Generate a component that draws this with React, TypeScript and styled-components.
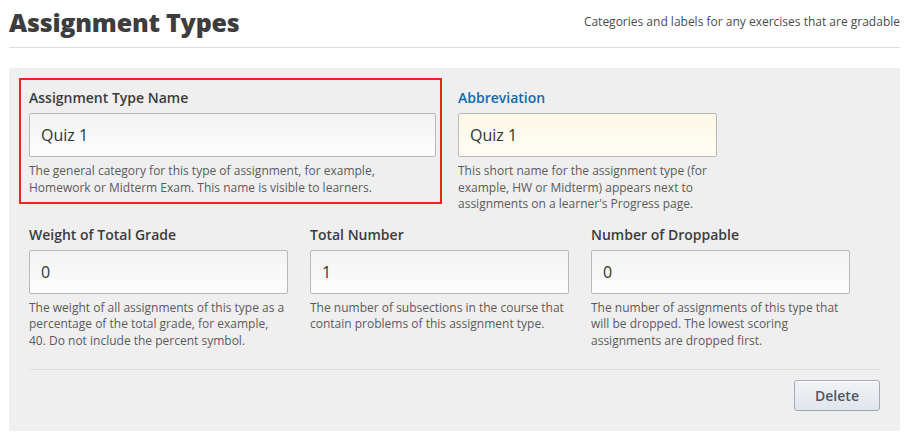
import React from "react";
import styled, { createGlobalStyle } from "styled-components";

const Global = createGlobalStyle`
  html, body { margin: 0; padding: 0; background: #fff; }
  body { font-family: "Open Sans", "Liberation Sans", sans-serif; color: #3c3c3c; }
  * { box-sizing: border-box; }
`;

const Page = styled.div`
  width: 917px;
  padding: 0 17px 0 9px;
`;

const Header = styled.header`
  display: flex;
  align-items: center;
  justify-content: space-between;
  height: 48px;
  border-bottom: 1px solid #ddd;
  padding-bottom: 4px;
`;

const Title = styled.h1`
  margin: 0;
  font-family: "Open Sans", sans-serif;
  font-weight: 800;
  font-size: 25px;
  letter-spacing: -0.2px;
  color: #3d3d3d;
`;

const Subtitle = styled.p`
  margin: 0;
  font-size: 12px;
  color: #4c4c4c;
`;

const Panel = styled.section`
  margin-top: 20px;
  background: #efefef;
  border-radius: 3px;
  padding: 10px 20px 20px 20px;
`;

const Row = styled.div<{ $gap: number; $mt?: number }>`
  display: flex;
  align-items: flex-start;
  gap: ${(p) => p.$gap}px;
  margin-top: ${(p) => p.$mt ?? 0}px;
`;

const Highlight = styled.div`
  margin-left: -10px;
  border: 2px solid #e8281c;
  padding: 8px 4px 6px 8px;
`;

const Field = styled.div<{ $w: number; $offset?: number }>`
  width: ${(p) => p.$w}px;
  margin-top: ${(p) => p.$offset ?? 0}px;
  display: flex;
  flex-direction: column;
`;

const Label = styled.label<{ $active?: boolean }>`
  font-size: 14px;
  font-weight: 600;
  line-height: 20px;
  color: ${(p) => (p.$active ? "#0e6bae" : "#3c3c3c")};
  margin-bottom: 5px;
`;

const Input = styled.input<{ $filled?: boolean }>`
  height: 44px;
  width: 100%;
  border: 1px solid #b9b9b9;
  border-radius: 2px;
  padding: 0 11px;
  font-family: "Open Sans", sans-serif;
  font-size: 16px;
  color: #333;
  background: ${(p) =>
    p.$filled
      ? "linear-gradient(#fcf8e8, #fffdf4)"
      : "linear-gradient(#f3f3f3, #fdfdfd)"};
  outline: none;
`;

const Help = styled.p`
  margin: 6px 0 0 0;
  font-size: 12px;
  line-height: 16.5px;
  color: #5b5b5b;
`;

const Divider = styled.hr`
  border: 0;
  border-top: 1px solid #dcdcdc;
  margin: 20px 0 10px 0;
`;

const Actions = styled.div`
  display: flex;
  justify-content: flex-end;
`;

const DeleteButton = styled.button`
  width: 86px;
  height: 31px;
  border: 1px solid #a2a8b6;
  border-radius: 3px;
  background: linear-gradient(#f1f3f6, #e1e5ec);
  font-family: "Open Sans", sans-serif;
  font-size: 14px;
  font-weight: 600;
  color: #4e5668;
  box-shadow: inset 0 1px 0 #fff;
`;

export default function App() {
  return (
    <>
      <Global />
      <Page>
        <Header>
          <Title>Assignment Types</Title>
          <Subtitle>Categories and labels for any exercises that are gradable</Subtitle>
        </Header>
        <Panel>
          <Row $gap={16}>
            <Highlight>
              <Field $w={407}>
                <Label>Assignment Type Name</Label>
                <Input defaultValue="Quiz 1" />
                <Help>
                  The general category for this type of assignment, for example,
                  <br />
                  Homework or Midterm Exam. This name is visible to learners.
                </Help>
              </Field>
            </Highlight>
            <Field $w={259} $offset={10}>
              <Label $active>Abbreviation</Label>
              <Input $filled defaultValue="Quiz 1" />
              <Help>
                This short name for the assignment type (for example, HW or
                Midterm) appears next to assignments on a learner's Progress page.
              </Help>
            </Field>
          </Row>
          <Row $gap={22} $mt={12}>
            <Field $w={259}>
              <Label>Weight of Total Grade</Label>
              <Input defaultValue="0" />
              <Help>
                The weight of all assignments of this type as a percentage of the
                total grade, for example, 40. Do not include the percent symbol.
              </Help>
            </Field>
            <Field $w={259}>
              <Label>Total Number</Label>
              <Input defaultValue="1" />
              <Help>
                The number of subsections in the course that contain problems of
                this assignment type.
              </Help>
            </Field>
            <Field $w={259}>
              <Label>Number of Droppable</Label>
              <Input defaultValue="0" />
              <Help>
                The number of assignments of this type that will be dropped. The
                lowest scoring assignments are dropped first.
              </Help>
            </Field>
          </Row>
          <Divider />
          <Actions>
            <DeleteButton>Delete</DeleteButton>
          </Actions>
        </Panel>
      </Page>
    </>
  );
}
